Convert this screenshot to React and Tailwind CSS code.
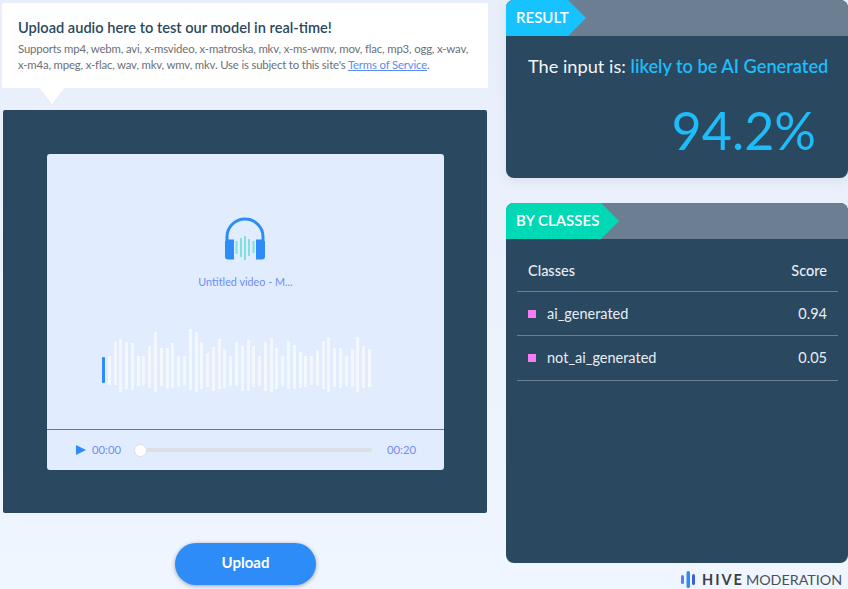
import React from "react";

// [top, bottom] of each wave bar, relative to the top of the wave box
const bars = [
  [27, 56], [13, 56], [10, 63], [13, 60], [14, 61], [27, 57], [27, 56], [17, 59], [3, 63], [19, 57],
  [19, 60], [14, 59], [27, 58], [27, 56], [0, 61], [3, 63], [13, 60], [24, 58], [18, 62], [10, 60],
  [20, 59], [27, 57], [13, 57], [17, 62], [11, 62], [17, 58], [27, 57], [13, 62], [9, 63], [19, 60],
  [27, 57], [12, 60], [16, 60], [23, 59], [27, 58], [27, 56], [21, 57], [12, 60], [8, 63], [19, 58],
  [19, 59], [27, 57], [20, 58], [8, 63], [17, 59], [20, 58],
];

const Headphones = () => (
  <svg width="44" height="44" viewBox="0 0 44 44" fill="none" className="-translate-x-px">
    <path d="M4 24V21a18 18 0 0 1 36 0v3" stroke="#2d8cf8" strokeWidth="3" />
    <path d="M2 26a2.500 2.500 0 0 1 2.500-2.500H11v20H5a3 3 0 0 1-3-3z" fill="#2d8cf8" />
    <path d="M42 26a2.500 2.500 0 0 0-2.500-2.500H33v20h6a3 3 0 0 0 3-3z" fill="#2d8cf8" />
    <path d="M13.500 25v13M18 22v19M22 20v24M26 23v17M30.500 25v12" stroke="#7fe0e0" strokeWidth="2" />
  </svg>
);

const HiveMark = () => (
  <svg width="15" height="17" viewBox="0 0 15 17" fill="none">
    <rect x="0" y="4" width="3" height="9" rx="1.500" fill="#5b7cf0" />
    <rect x="5.500" y="0" width="3.500" height="17" rx="1.700" fill="#2d8cf8" />
    <rect x="11" y="3" width="3" height="11" rx="1.500" fill="#3f5fd8" />
  </svg>
);

const Tag = ({ label, className }) => (
  <div className="h-9 bg-[#6b7e92] rounded-t-lg overflow-hidden">
    <div className={`h-9 flex items-center pl-[10px] pb-[2px] text-white text-[15px] font-semibold ${className}`}>
      {label}
    </div>
  </div>
);

const ClassRow = ({ name, score, className }) => (
  <div className={`flex items-center justify-between px-[11px] border-b border-[#6b7e92] text-[14.500px] text-[#e8eef5] ${className}`}>
    <div className="flex items-center gap-[11px]">
      <span className="w-2 h-2 bg-[#f67cf4]" />
      <span>{name}</span>
    </div>
    <span>{score}</span>
  </div>
);

export default function App() {
  return (
    <div className="w-[848px] h-[589px] overflow-hidden flex bg-linear-to-b from-[#e8eefa] to-[#f0f6ff] font-['Lato','Liberation_Sans',sans-serif]">
      {/* left column */}
      <div className="w-[488px] pl-[2px] pt-[3px] flex flex-col shrink-0">
        <div className="h-[85px] bg-white pl-4 pt-4">
          <div className="text-[14.600px] leading-[18px] font-semibold text-[#2a4860]">
            Upload audio here to test our model in real-time!
          </div>
          <p className="mt-[4px] text-[11.400px] tracking-[-0.18px] leading-[16px] text-[#6b6f78] whitespace-nowrap">
            Supports mp4, webm, avi, x-msvideo, x-matroska, mkv, x-ms-wmv, mov, flac, mp3, ogg, x-wav,
            <br />
            x-m4a, mpeg, x-flac, wav, mkv, wmv, mkv. Use is subject to this site's{" "}
            <a className="underline text-[#5b8cf5]">Terms of Service</a>.
          </p>
        </div>
        <div className="ml-[38px] w-0 h-0 border-x-12 border-x-transparent border-t-16 border-t-white" />

        <div className="mt-[6px] ml-px w-[484px] h-[403px] bg-[#2a4860] rounded-[2px] pt-[44px] pl-[44px]">
          <div className="w-[397px] h-[316px] bg-[#e1edff] rounded-[3px] flex flex-col">
            <div className="pt-[62px] flex flex-col items-center">
              <Headphones />
              <div className="mt-[15px] text-[10.800px] leading-[14px] text-[#6f8cf0]">Untitled video - M...</div>
            </div>

            <div className="mt-[40px] ml-[55px] w-[269px] h-[64px] flex justify-between">
              <div className="w-[3px] h-[26px] mt-[28px] bg-[#2d8cf8] rounded-[1px] shrink-0" />
              {bars.map(([top, bottom], i) => (
                <div
                  key={i}
                  className="w-[3px] bg-white/60 shrink-0"
                  style={{ marginTop: top, height: bottom - top }}
                />
              ))}
            </div>

            <div className="mt-auto h-[41px] border-t border-[#3f7fd0] flex items-center pl-[29px] text-[11.300px] text-[#6f8cf0]">
              <svg width="10" height="10" viewBox="0 0 10 10" className="shrink-0">
                <path d="M0 0L10 5L0 10z" fill="#2d8cf8" />
              </svg>
              <span className="ml-[6px] w-[28px]">00:00</span>
              <div className="ml-[14px] w-[238px] h-1 bg-[#dcdfe3] rounded-full flex items-center">
                <span className="w-[13px] h-[13px] bg-white rounded-full border border-[#dcdfe3] shrink-0" />
              </div>
              <span className="ml-[15px]">00:20</span>
            </div>
          </div>
        </div>

        <button className="mt-[30px] ml-[173px] w-[141px] h-[42px] pb-[3px] rounded-full bg-[#2d8cf8] text-white text-[15px] font-bold shadow-[0_1px_4px_rgba(0,0,0,0.35)]">
          Upload
        </button>
      </div>

      {/* right column */}
      <div className="ml-[18px] w-[342px] shrink-0">
        <div className="h-[178px] bg-[#2a4860] rounded-lg shadow-[0_4px_12px_rgba(42,72,96,0.08)]">
          <Tag
            label="RESULT"
            className="w-[80px] bg-[#17c3ff] [clip-path:polygon(0_0,62px_0,80px_50%,62px_100%,0_100%)]"
          />
          <div className="pt-[18px] pl-[22px] text-[18.200px] leading-[24px] text-[#f2f6fa]">
            The input is: <span className="font-semibold text-[#1ebcf8]">likely to be AI Generated</span>
          </div>
          <div className="mt-[23px] pr-[32px] text-right text-[52px] leading-[58px] text-[#1ebcf8]">94.2%</div>
        </div>

        <div className="mt-[25px] h-[360px] bg-[#2a4860] rounded-lg">
          <Tag
            label="BY CLASSES"
            className="w-[113px] bg-[#00d9b5] [clip-path:polygon(0_0,95px_0,113px_50%,95px_100%,0_100%)]"
          />
          <div className="ml-[11px] mr-[10px]">
            <div className="h-[53px] pt-3 flex items-center justify-between px-[11px] border-b border-[#6b7e92] text-[14.500px] font-medium text-[#e8eef5]">
              <span>Classes</span>
              <span>Score</span>
            </div>
            <ClassRow name="ai_generated" score="0.94" className="h-[44px]" />
            <ClassRow name="not_ai_generated" score="0.05" className="h-[45px]" />
          </div>
        </div>

        <div className="mt-[8px] pl-[175px] flex items-center h-[17px]">
          <HiveMark />
          <span className="ml-[6px] text-[14.500px] font-bold tracking-[2px] text-[#3a3f48]">HIVE</span>
          <span className="ml-[2px] text-[14.300px] text-[#4a4f58]">MODERATION</span>
        </div>
      </div>
    </div>
  );
}
